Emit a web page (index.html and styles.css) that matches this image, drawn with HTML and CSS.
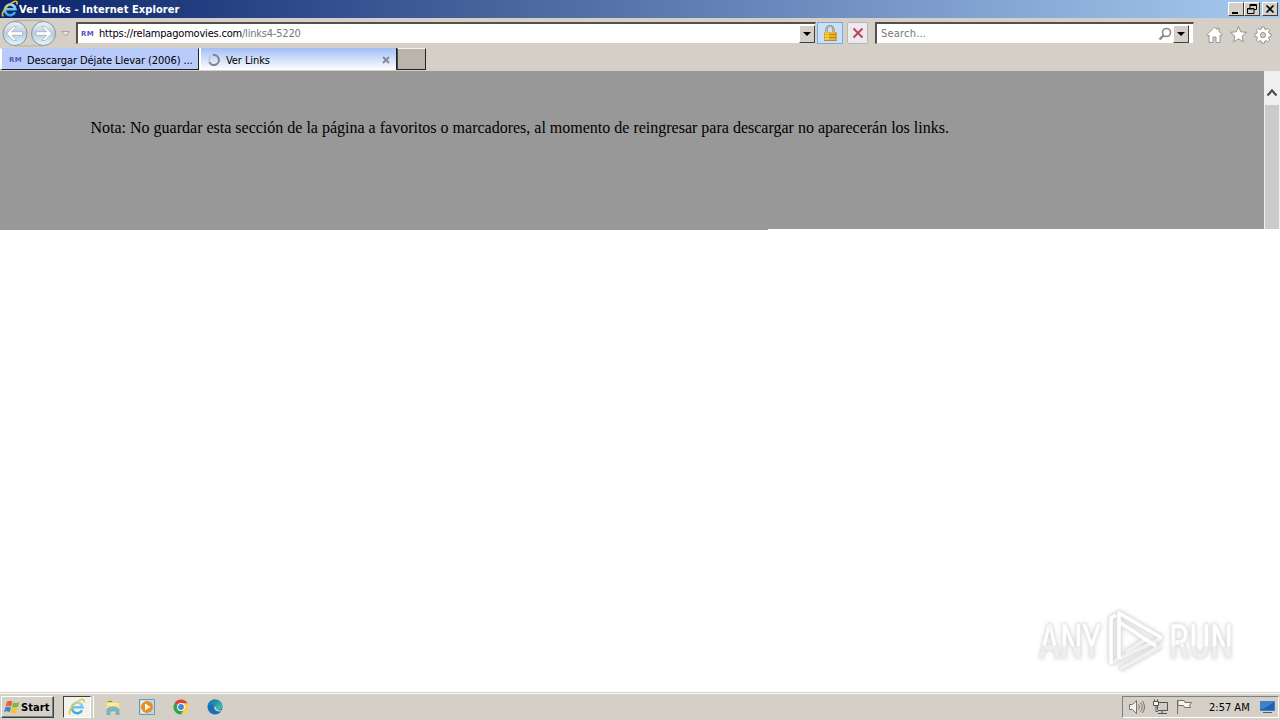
FILE: index.html
```html
<!DOCTYPE html>
<html lang="es">
<head>
  <meta charset="UTF-8" />
  <title>Ver Links</title>
  <link rel="stylesheet" href="styles.css">
</head>
<body>
  <svg width="0" height="0" class="defs">
    <defs>
      <linearGradient id="ieBlue" x1="0" y1="0" x2="0" y2="1">
        <stop offset="0" stop-color="#8fe0fb" />
        <stop offset="1" stop-color="#3aa3e4" />
      </linearGradient>
      <linearGradient id="glass" x1="0" y1="0" x2="0" y2="1">
        <stop offset="0" stop-color="#eef2f7" />
        <stop offset=".5" stop-color="#bccbdc" />
        <stop offset="1" stop-color="#e2fafd" />
      </linearGradient>
      <linearGradient id="edge" x1="0" y1="0" x2="1" y2="1">
        <stop offset="0" stop-color="#0b68b5" />
        <stop offset="1" stop-color="#43d2a0" />
      </linearGradient>
      <linearGradient id="mark" x1="0" y1="0" x2="0" y2="1">
        <stop offset=".58" stop-color="#fff" />
        <stop offset=".58" stop-color="#efefef" />
      </linearGradient>
      <symbol id="ie" viewBox="0 0 18 18">
        <path d="M14 12.200A5.300 5.300 0 1 1 14.500 9.300H4.700" fill="none" stroke="url(#ieBlue)" stroke-width="2.600" />
        <path d="M2.300 16.300C-.8 14 5 5.500 12 2.100c3.300-1.600 5-.6 3.600 2.400" fill="none" stroke="#efc52c" stroke-width="1.600" />
      </symbol>
    </defs>
  </svg>

  <header class="titlebar">
    <svg class="title-icon" width="18" height="18"><use href="#ie" /></svg>
    <span class="title">Ver Links - Internet Explorer</span>
    <div class="win-buttons">
      <span class="win-btn"><svg width="14" height="12"><path d="M3 9h6v2H3z" /></svg></span>
      <span class="win-btn"><svg width="14" height="12"><path d="M5 1.500h6.500v5H9M5 1.500V5M5 2.500h6M2.500 5.500H9v5H2.500zM2.500 6h6" fill="none" stroke="#000" /></svg></span>
      <span class="win-btn close"><svg width="14" height="12"><path d="M3.500 2.500l7 7m0-7l-7 7" stroke="#000" stroke-width="1.600" /></svg></span>
    </div>
  </header>

  <nav class="navbar">
    <svg class="arrows" width="76" height="30">
      <path d="M15 2.500h28M15 28h28" stroke="#b5b1aa" />
      <g fill="url(#glass)" stroke="#8492a3">
        <circle cx="15" cy="15.500" r="12" />
        <circle cx="43.500" cy="15.500" r="12" />
      </g>
      <g fill="#fff" stroke="#9aa8b7" stroke-width=".7">
        <path d="M6.500 15.500l7-7h3.200l-4.800 5.200h10.600v3.600H11.900l4.800 5.200h-3.200z" />
        <path d="M52 15.500l-7-7h-3.200l4.800 5.200H36v3.600h10.600l-4.800 5.200H45z" />
      </g>
      <path d="M61.500 13.500h8l-4 4.500z" fill="#e6e2dc" stroke="#aaa69f" />
    </svg>
    <div class="field address">
      <span class="rm">RM</span>
      <span class="url">https://relampagomovies.com<span class="path">/links4-5220</span></span>
      <span class="drop"></span>
    </div>
    <span class="tool lock">
      <svg width="16" height="18">
        <path d="M4.500 9V5.500a3.500 3.500 0 0 1 7 0V9" fill="none" stroke="#8c8460" stroke-width="2.200" />
        <path d="M4.500 9V5.500a3.500 3.500 0 0 1 7 0V9" fill="none" stroke="#d9d3b0" stroke-width=".8" />
        <path d="M2 8h12.500v9H2z" fill="#e9b42c" />
        <path d="M2 10.500h12.500M2 13.500h12.500M2 16.500h12.500M14 8v9" stroke="#bd8a1e" />
        <path d="M3 9h4v7H3z" fill="#ffe070" fill-opacity=".5" />
      </svg>
    </span>
    <span class="tool stop">
      <svg width="12" height="12"><path d="M1.500 1.500l9 9m0-9l-9 9" stroke="#bd4550" stroke-width="2" /></svg>
    </span>
    <div class="field search">
      <span class="hint">Search...</span>
      <svg width="14" height="14"><circle cx="8.500" cy="5.500" r="4" fill="none" stroke="#888" stroke-width="1.600" /><path d="M5.500 8.500l-4 4" stroke="#888" stroke-width="2.400" /></svg>
      <span class="drop"></span>
    </div>
    <svg class="commands" width="70" height="20" fill="#fff" stroke="#98938c">
      <path d="M.8 9.800L8.500 2l2.500 2.500V3h2v3.500l3.200 3.300-1.200 1.200-1-1v7.500H10V12H7v5.500H3V10l-1 1z" />
      <path d="M32.500 1.500l2.300 5.300 5.700.5-4.300 3.800 1.300 5.700-5-3-5 3 1.300-5.700-4.300-3.800 5.700-.5z" />
      <g transform="translate(57 9.500)">
        <path d="M-1.300-7.500h2.600l.4 2 1.300.6 1.800-1.200 1.900 1.900-1.200 1.800.6 1.300 2 .4v2.600l-2 .4-.6 1.300 1.200 1.800-1.900 1.900-1.800-1.200-1.300.6-.4 2h-2.600l-.4-2-1.300-.6-1.800 1.200-1.900-1.900 1.200-1.800-.6-1.300-2-.4V-.7l2-.4.6-1.300-1.200-1.800 1.900-1.900 1.800 1.200 1.300-.6z" />
        <circle cx="0" cy=".6" r="2.600" fill="#d4d0c8" />
      </g>
    </svg>
  </nav>

  <div class="tabs">
    <div class="tab first"><span class="rm">RM</span><span class="tab-text">Descargar Déjate Llevar (2006) ...</span></div>
    <div class="tab active">
      <svg class="spinner" width="14" height="14"><path d="M6 2.100a5 5 0 1 1-3.700 6.900" fill="none" stroke="#7e848e" stroke-width="2" /><path d="M2.300 8A5 5 0 0 1 5 2.400" fill="none" stroke="#b9cbed" stroke-width="2" /></svg>
      <span class="tab-text">Ver Links</span>
      <svg class="tab-close" width="8" height="8"><path d="M1 1l6 6m0-6L1 7" stroke="#7d8899" stroke-width="1.800" /></svg>
    </div>
    <div class="new-tab"></div>
  </div>

  <main class="viewport">
    <div class="page">
      <p class="note">Nota: No guardar esta sección de la página a favoritos o marcadores, al momento de reingresar para descargar no aparecerán los links.</p>
    </div>
    <div class="scrollbar">
      <svg width="16" height="34"><path d="M3.500 24.500l4.500-5 4.500 5" fill="none" stroke="#505050" stroke-width="2.200" /></svg>
      <div class="thumb"></div>
    </div>
  </main>
  <div class="repaint"></div>

  <section class="blank">
    <svg class="watermark" width="200" height="66">
      <g class="word">
        <text transform="translate(3 52) scale(.78 1)" textLength="80" lengthAdjust="spacingAndGlyphs">ANY</text>
        <text transform="translate(133 52) scale(.78 1)" textLength="82" lengthAdjust="spacingAndGlyphs">RUN</text>
      </g>
      <g fill="none" stroke-linejoin="round" transform="translate(70 4)">
        <path d="M5 54V8l5-3M13 49V3l43 25M13 12l37 24" stroke="#e2e2e2" stroke-width="5" />
        <path d="M13 49l43-21M20 42l22-14M7 53l5-4M14 59l41-23" stroke="#e2e2e2" stroke-width="5" />
        <path d="M13 49l43-21M20 42l22-14M7 53l5-4M14 59l41-23" stroke="#f1f1f1" stroke-width="3.500" />
        <path d="M5 54V8l5-3M13 49V3l43 25M13 12l37 24" stroke="#fff" stroke-width="3.500" />
      </g>
    </svg>
  </section>

  <footer class="taskbar">
    <div class="start">
      <svg width="17" height="16">
        <path d="M3 2.500c2-1 4-.8 5.500.3L7.200 7.500c-1.700-1-3.500-1.200-5.500-.3z" fill="#e9622d" />
        <path d="M9.300 3.200c2 1 4 .9 6-.2L14 7.800c-2 1-4 1.100-6 .1z" fill="#7fb93e" />
        <path d="M1.400 8.200c2-.9 3.800-.7 5.500.3l-1.300 4.700c-1.700-1-3.500-1.200-5.500-.3z" fill="#3f83c8" />
        <path d="M7.700 8.900c2 1 4 .9 6-.1l-1.300 4.700c-2 1-4 1-6 0z" fill="#f5c52c" />
      </svg>
      <span>Start</span>
    </div>
    <div class="running"><span class="running-face"><svg width="18" height="18"><use href="#ie" /></svg></span></div>
    <div class="launch">
      <svg width="18" height="18">
        <path d="M2 2h6l1 2h7v10H2z" fill="#ecd170" />
        <path d="M3 5h12v3H3z" fill="#f9edb0" /><path d="M4 3.500h4" stroke="#54a866" />
        <path d="M2 7.500h14V15H2z" fill="#f3dd8c" />
        <path d="M3 16.500V11q6-4 12 0v5.500h-3V13H6v3.500z" fill="#75b9df" stroke="#4e98c5" stroke-width=".6" />
      </svg>
      <svg width="18" height="18">
        <path d="M1.500 1.500h15v15h-15z" fill="#b9dcef" stroke="#5b9fc6" />
        <path d="M3 3h9v12H3z" fill="#e9f5fb" />
        <circle cx="9" cy="9" r="6" fill="#f28a1c" /><path d="M7 5.500v7L12.500 9z" fill="#fff" />
      </svg>
      <svg width="18" height="18">
        <circle cx="9" cy="9" r="7.500" fill="#ffcd40" />
        <path d="M9 9L2.500 5.250A7.500 7.500 0 0 1 15.500 5.250H9z" fill="#de4335" />
        <path d="M2.500 5.250A7.500 7.500 0 0 0 9 16.500l3.200-5.600L9 9z" fill="#2fa253" />
        <circle cx="9" cy="9" r="3.900" fill="#fff" /><circle cx="9" cy="9" r="2.900" fill="#4285e8" />
      </svg>
      <svg width="18" height="18">
        <circle cx="9" cy="9" r="7.500" fill="#1670bd" />
        <path d="M1.500 9C2 3.500 5.500 1.500 9 1.500c4.500 0 7.500 3.500 7.500 6.800 0 2.400-2 3.700-4.500 3.500-2-.2-2.500-1-1.700-2.200C9 5 3 5.500 1.500 9z" fill="url(#edge)" />
        <path d="M8.600 7.800c-1.500 3.700 2 6.500 6.300 5.500l1-1.300c-2 .6-6.500.3-5.600-2.400z" fill="#d4d0c8" />
      </svg>
    </div>
    <div class="tray">
      <svg class="tray-icons" width="68" height="18" fill="#f6f4f0" stroke="#77736c">
        <path d="M.5 6.500h3l4-4v13l-4-4h-3z" />
        <path d="M9.500 6.500q2 2.500 0 5M11.500 4.500q3.500 4.500 0 9M13.500 3q4 6 0 12" fill="none" />
        <path d="M28.500 4.500h10v8h-10z" fill="#d0cdc7" stroke="#55524d" /><path d="M29 15.500h9M33 13v2" stroke="#55524d" />
        <path d="M24.500 3.500h5v4h-5zM25.500 1.500v2M28.500 1.500v2M27 7.500v6h2" stroke="#55524d" />
        <path d="M48.500 2v14M49 2.500h6l1 2h6.500l-2 3 1 2h-6l-1-2H49z" />
      </svg>
      <span class="clock">2:57 AM</span>
      <svg class="desktop" width="17" height="14"><path d="M1.500 1.500h14v9h-14z" fill="#2262b5" stroke="#477fb9" /><path d="M2 2h13L4 9H2z" fill="#3d83d0" /><path d="M4 12.500h9" stroke="#4d5966" /></svg>
    </div>
  </footer>
</body>
</html>
```
FILE: styles.css
```css
* {
  box-sizing: border-box;
}
body {
  margin: 0;
  width: 1280px;
  height: 720px;
  overflow: hidden;
  display: flex;
  flex-direction: column;
  background: #fff;
  color: #000;
  font-family: "DejaVu Sans Condensed", "DejaVu Sans", sans-serif;
  font-size: 11px;
}
svg {
  display: block;
  flex: none;
}
.defs {
  position: absolute;
}
span {
  white-space: nowrap;
}

/* title bar */
.titlebar {
  height: 18px;
  flex: none;
  display: flex;
  align-items: center;
  background: linear-gradient(90deg, #0b246b, #a6caf0);
  padding: 0 2px 0 1px;
}
.title {
  color: #fff;
  font-weight: bold;
  letter-spacing: 0.08px;
}
.win-buttons {
  display: flex;
  margin-left: auto;
}
.win-btn {
  width: 16px;
  height: 14px;
  background: #d4d0c8;
  border: 1px solid;
  border-color: #fff #404040 #404040 #fff;
}
.win-btn.close {
  margin-left: 2px;
}

/* navigation bar */
.navbar {
  height: 30px;
  flex: none;
  display: flex;
  align-items: center;
  background: #d4d0c8;
}
.field {
  height: 22px;
  display: flex;
  align-items: center;
  background: #fff;
  border: 1px solid;
  border-color: #55504a #d4d0c8 #d4d0c8 #55504a;
  border-top-width: 2px;
  border-left-width: 2px;
}
.address {
  width: 740px;
  padding: 0 0 0 3px;
}
.rm {
  width: 18px;
  color: #5a55b8;
  font-family: "DejaVu Sans", sans-serif;
  font-size: 7px;
  font-weight: bold;
  letter-spacing: 0.3px;
}
.url {
  letter-spacing: -0.2px;
}
.path,
.hint {
  color: #77777c;
}
.hint {
  letter-spacing: 0.2px;
}
.drop {
  width: 16px;
  height: 18px;
  margin-left: auto;
  display: flex;
  align-items: center;
  justify-content: center;
  background: #d4d0c8;
  border: 1px solid;
  border-color: #fff #404040 #404040 #fff;
}
.drop::before {
  content: "";
  border: 4px solid transparent;
  border-top-color: #000;
  border-bottom: 0;
}
.tool {
  height: 22px;
  display: flex;
  align-items: center;
  justify-content: center;
}
.lock {
  width: 26px;
  margin-left: 1px;
  background: #c9e0fa;
  border: 1px solid #78a9df;
}
.stop {
  width: 21px;
  margin-left: 4px;
  background: #eceaf0;
  border: 1px solid #b9b6b8;
  border-radius: 2px;
}
.search {
  width: 319px;
  margin-left: 7px;
  padding: 0 4px;
}
.search svg {
  margin-left: auto;
}
.search .drop {
  margin-left: 1px;
}
.commands {
  margin: 4px 0 0 12px;
}

/* tabs */
.tabs {
  height: 23px;
  flex: none;
  display: flex;
  background: #d4d0c8;
}
.tab {
  height: 22px;
  display: flex;
  align-items: center;
  border-right: 1px solid #222;
}
.tab-text {
  padding-top: 1px;
  letter-spacing: -0.08px;
}
.first {
  width: 199px;
  padding: 1px 0 0 7px;
  border: 1px solid;
  border-color: #b8c8f0 #222 #222 #fff;
  border-left-width: 2px;
  background: #b9cbfa;
}
.active {
  width: 198px;
  padding: 1px 6px 0 8px;
  border-left: 2px solid #fff;
  background: linear-gradient(#a3bef5, #fff);
}
.spinner {
  margin: 0 5px 0 -2px;
}
.tab-close {
  margin-left: auto;
}
.new-tab {
  width: 29px;
  height: 22px;
  background: #bab4ac;
  border: 1px solid;
  border-color: #f4f2ee #222 #222 #444;
}

/* loaded page */
.viewport {
  height: 158px;
  flex: none;
  display: flex;
}
.page {
  flex: 1;
  padding: 48px 90.5px;
  background: #989898;
}
.note {
  margin: 0;
  color: #000;
  font: 16px/18px "Liberation Serif", serif;
  white-space: nowrap;
}
.scrollbar {
  width: 16px;
  display: flex;
  flex-direction: column;
  background: #f0f0f0;
}
.thumb {
  flex: 1;
  margin: 0 1px;
  background: #cbcbcb;
}
.repaint {
  width: 768px;
  height: 1px;
  background: #989898;
}
.blank {
  flex: 1;
  display: flex;
  align-items: flex-end;
  justify-content: flex-end;
  padding: 0 44px 20px 0;
}

/* watermark */
.watermark {
  overflow: visible;
  filter: drop-shadow(0 0 2px #ccc);
}
.word {
  font: 500 49px "Roboto", sans-serif;
  fill: url(#mark);
  stroke: #e6e6e6;
  stroke-width: 0.6;
}

/* taskbar */
.taskbar {
  height: 28px;
  flex: none;
  display: flex;
  align-items: center;
  background: #d4d0c8;
  border-top: 1px solid #d4d0c8;
  box-shadow: inset 0 1px #fff;
  padding: 1px 1px 0;
}
.start {
  width: 53px;
  height: 22px;
  display: flex;
  align-items: center;
  padding-left: 2px;
  border: 1px solid;
  border-color: #fff #404040 #404040 #fff;
  box-shadow: inset -1px -1px #808080;
  font-weight: bold;
  letter-spacing: 0.1px;
}
.running {
  width: 31px;
  height: 22px;
  margin-left: 9px;
  border-right: 1px solid #fff;
}
.running-face {
  width: 28px;
  height: 22px;
  display: flex;
  align-items: center;
  justify-content: center;
  background: #f3f2ef;
  border: 1px solid;
  border-color: #404040 #fff #fff #404040;
}
.launch {
  display: flex;
  gap: 16px;
  margin-left: 10px;
}
.tray {
  width: 157px;
  height: 22px;
  margin-left: auto;
  display: flex;
  align-items: center;
  padding-left: 6px;
  border: 1px solid;
  border-color: #808080 #fff #fff #808080;
}
.clock {
  width: 50px;
  margin-left: 12px;
}
```
